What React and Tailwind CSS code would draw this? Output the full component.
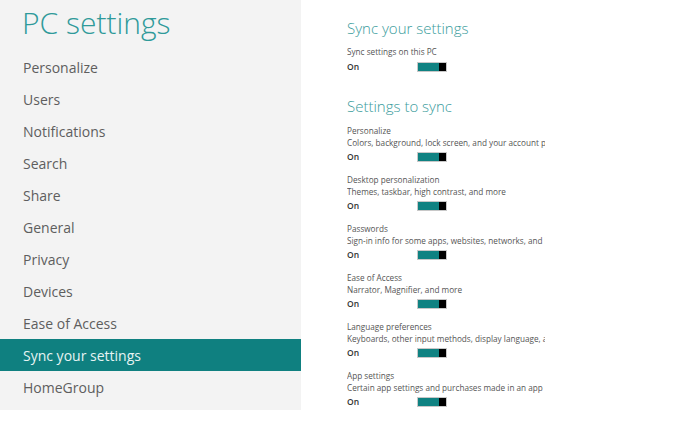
import React from "react";

const menu = [
  "Personalize",
  "Users",
  "Notifications",
  "Search",
  "Share",
  "General",
  "Privacy",
  "Devices",
  "Ease of Access",
  "Sync your settings",
  "HomeGroup",
];

const syncItems = [
  { label: "Personalize", desc: "Colors, background, lock screen, and your account picture" },
  { label: "Desktop personalization", desc: "Themes, taskbar, high contrast, and more" },
  { label: "Passwords", desc: "Sign-in info for some apps, websites, networks, and HomeGroup" },
  { label: "Ease of Access", desc: "Narrator, Magnifier, and more" },
  { label: "Language preferences", desc: "Keyboards, other input methods, display language, and more" },
  { label: "App settings", desc: "Certain app settings and purchases made in an app" },
];

const Toggle = () => (
  <div className="flex h-[10px] w-[30px] border border-[#c8c8c8]">
    <div className="flex-1 bg-[#0f8282]" />
    <div className="w-[7px] bg-black" />
  </div>
);

const OnRow = ({ className = "" }) => (
  <div className={`flex h-[14px] items-center ${className}`}>
    <span className="w-[70px] text-[8.5px] font-semibold text-[#333]">On</span>
    <Toggle />
  </div>
);

const App = () => {
  const active = "Sync your settings";

  return (
    <div
      className="flex h-[438px] w-[700px] items-start bg-white"
      style={{ fontFamily: '"Open Sans", "Noto Sans", sans-serif' }}
    >
      {/* left nav */}
      <div className="h-[410px] w-[301px] shrink-0 bg-[#f3f3f3]">
        <div className="h-[51px] pl-[22px] pt-[3px] text-[30px] font-light leading-[40px] text-[#2f9a9a]">
          PC settings
        </div>
        {menu.map((m) => (
          <div
            key={m}
            className={`flex h-[32px] items-center pl-[23px] text-[14px] ${
              m === active ? "bg-[#0f8080] text-[#e6f3f3]" : "text-[#5e5e5e]"
            }`}
          >
            {m}
          </div>
        ))}
      </div>

      {/* right content */}
      <div className="ml-[46px] w-[198px] overflow-hidden whitespace-nowrap pt-[16px]">
        <div className="text-[15px] font-light leading-[24px] text-[#3a9c9c]">Sync your settings</div>
        <div className="mt-[6px] text-[8.2px] leading-[12px] text-[#555]">Sync settings on this PC</div>
        <OnRow className="mt-[2px]" />

        <div className="mt-[20px] text-[15px] font-light leading-[24px] text-[#3a9c9c]">Settings to sync</div>
        <div className="mt-[7px] flex flex-col gap-[10px]">
          {syncItems.map((it) => (
            <div key={it.label}>
              <div className="text-[8.2px] leading-[12px] text-[#555]">{it.label}</div>
              <div className="text-[8.2px] leading-[12px] text-[#555]">{it.desc}</div>
              <OnRow className="mt-[1px]" />
            </div>
          ))}
        </div>
      </div>
    </div>
  );
};

export default App;
